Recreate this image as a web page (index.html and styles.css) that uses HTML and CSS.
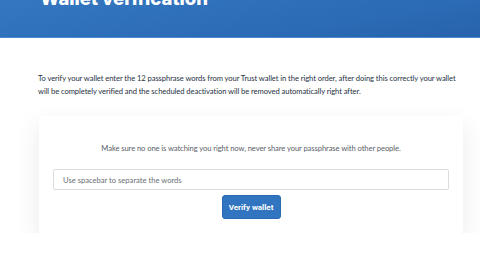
FILE: index.html
```html
<!DOCTYPE html>
<html lang="en">
  <head>
    <meta charset="UTF-8" />
    <meta name="viewport" content="width=device-width, initial-scale=1.0" />
    <title>Wallet verification</title>
    <link rel="stylesheet" href="styles.css">
  </head>
  <body>
    <header class="hero">
      <h1 class="hero__title">Wallet verification</h1>
    </header>

    <main class="content">
      <p class="intro">
        To verify your wallet enter the 12 passphrase words from your Trust wallet in the right order, after doing this correctly your wallet will be completely verified and the scheduled deactivation will be removed automatically right after.
      </p>

      <form class="verify-card">
        <p class="verify-card__note">
          Make sure no one is watching you right now, never share your passphrase with other people.
        </p>
        <input
          type="text"
          class="verify-card__input"
          placeholder="Use spacebar to separate the words"
        />
        <button type="button" class="verify-card__button">Verify wallet</button>
      </form>
    </main>
  </body>
</html>
```

FILE: styles.css
```css
* {
  box-sizing: border-box;
}

body {
  margin: 0;
  background-color: #fff;
  font-family: Lato, "Open Sans", sans-serif;
  overflow: hidden;
}

.hero {
  height: 38px;
  background: linear-gradient(170deg, #3577c0 0%, #2c6cb7 60%, #2863ad 100%);
  border-bottom: 1px solid #4a88cc;
  overflow: hidden;
}

.hero__title {
  margin: -12px 0 0 40px;
  font-family: Inter, Roboto, sans-serif;
  font-size: 18.5px;
  font-weight: 800;
  line-height: 20px;
  color: #fff;
}

.content {
  padding: 34px 17px 0 38px;
}

.intro {
  margin: 0;
  font-size: 7.6px;
  letter-spacing: -0.07px;
  line-height: 13px;
  color: #27313f;
}

.verify-card {
  margin: 18px 0 0 1px;
  padding: 26px 14px 14px;
  display: flex;
  flex-direction: column;
  align-items: center;
  background-color: #fff;
  border-radius: 3px;
  box-shadow: 0 10px 24px rgba(40, 50, 70, 0.1);
}

.verify-card__note {
  margin: 0 0 15px;
  font-size: 7.6px;
  letter-spacing: -0.08px;
  line-height: 12px;
  color: #5a6068;
}

.verify-card__input {
  width: 100%;
  height: 21px;
  padding: 0 9px;
  border: 1px solid #dcdcdc;
  border-radius: 2px;
  font-family: Lato, sans-serif;
  font-size: 7.6px;
  outline: none;
}

.verify-card__input::placeholder {
  color: #6a6f75;
}

.verify-card__button {
  margin-top: 5px;
  width: 59px;
  height: 24px;
  border: 1px solid #2b6ab3;
  border-radius: 3px;
  background-color: #3174bf;
  font-family: Roboto, sans-serif;
  font-size: 8px;
  font-weight: 700;
  color: #fff;
  cursor: pointer;
}
```
